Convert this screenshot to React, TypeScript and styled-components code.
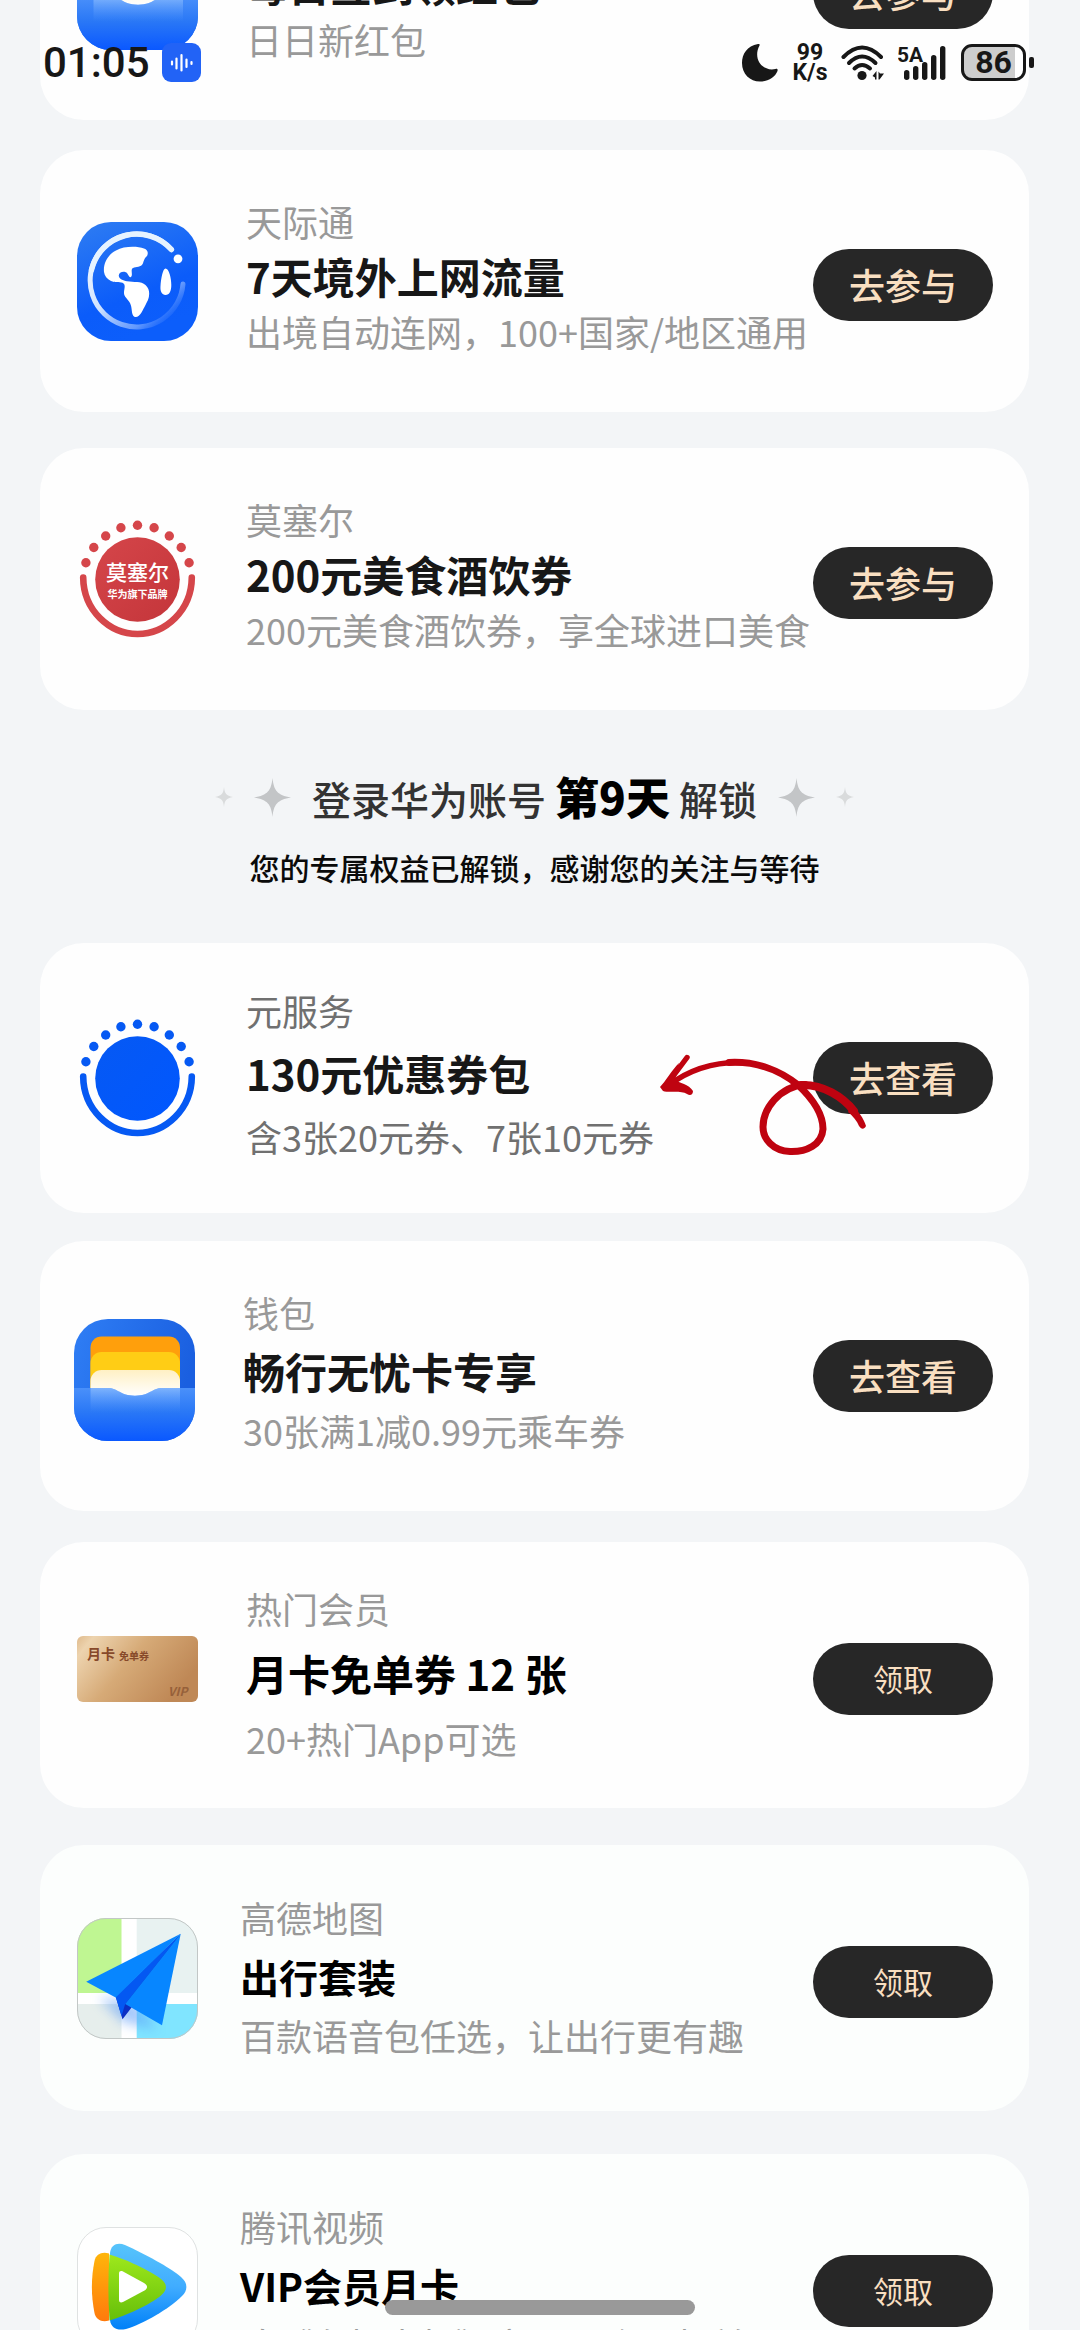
import React from 'react';
import styled, { createGlobalStyle } from 'styled-components';

const GlobalStyle = createGlobalStyle`
  *, *::before, *::after { box-sizing: border-box; }
  body {
    margin: 0;
    background: #f3f5f7;
    font-family: "Noto Sans CJK SC", "Noto Sans", sans-serif;
    -webkit-font-smoothing: antialiased;
  }
  h2, h3, p { margin: 0; font-weight: 400; }
`;

type Tone = 'promo' | 'view' | 'claim';

const Screen = styled.div`
  position: relative;
  height: 100vh;
  overflow: hidden;
  background: #f3f5f7;
`;

/* The feed is scrolled: its first card is partly above the top edge. */
const Feed = styled.main`
  display: flex;
  flex-direction: column;
  padding: 0 51px 0 40px;
  margin-top: -142px;
`;

const Card = styled.article<{ $height: number; $space: number; $inset: number; $tint?: boolean }>`
  position: relative;
  flex: none;
  display: flex;
  align-items: center;
  min-height: ${(p) => p.$height}px;
  margin-top: ${(p) => p.$space}px;
  padding: 0 36px 0 ${(p) => p.$inset}px;
  border-radius: 44px;
  background: ${(p) => (p.$tint ? '#fcfefd' : '#fefefe')};
`;

const IconSlot = styled.div`
  flex: none;
  width: 121px;
  display: flex;
  svg { display: block; width: 100%; height: auto; overflow: visible; }
`;

const Copy = styled.div<{ $gutter: number; $gap: number; $tone: Tone }>`
  flex: 1;
  min-width: 0;
  display: flex;
  flex-direction: column;
  gap: ${(p) => p.$gap}px;
  margin-left: ${(p) => p.$gutter}px;
  padding-bottom: ${(p) => (p.$tone === 'claim' ? 4 : 10)}px;
  white-space: nowrap;
`;

const Label = styled.p<{ $strong?: boolean }>`
  font-size: 36px;
  line-height: 48px;
  color: ${(p) => (p.$strong ? '#707070' : '#999999')};
`;

const Title = styled.h3<{ $small?: boolean; $black?: boolean }>`
  font-size: ${(p) => (p.$small ? 39 : 42)}px;
  line-height: 48px;
  font-weight: 700;
  color: ${(p) => (p.$black ? '#000000' : '#171717')};
`;

const Action = styled.button<{ $tone: Tone }>`
  flex: none;
  width: 180px;
  height: 72px;
  margin: ${(p) => (p.$tone === 'view' ? 0 : 7)}px 0 0;
  padding: 0 0 2px;
  border: 0;
  border-radius: 36px;
  background: #272727;
  color: #f9dfc1;
  font-family: inherit;
  font-size: ${(p) => (p.$tone === 'claim' ? 30 : 36)}px;
  font-weight: ${(p) => (p.$tone === 'claim' ? 400 : 500)};
  line-height: 48px;
  cursor: pointer;
`;

const Unlock = styled.header`
  flex: none;
  display: flex;
  flex-direction: column;
  align-items: center;
  gap: 16px;
  padding: 56px 0 53px;
`;

const UnlockRow = styled.div`
  display: flex;
  align-items: center;
  gap: 21px;
`;

const UnlockTitle = styled.h2`
  display: flex;
  align-items: baseline;
  gap: 9px;
  font-size: 39px;
  line-height: 60px;
  font-weight: 500;
  color: #333333;
  white-space: nowrap;
  strong { font-size: 44px; font-weight: 900; color: #000000; }
`;

const UnlockNote = styled.p`
  font-size: 30px;
  line-height: 46px;
  font-weight: 500;
  color: #0a0a0a;
`;

const ArrowMark = styled.svg`
  position: absolute;
  right: 160px;
  top: 110px;
  width: 210px;
  height: 106px;
  pointer-events: none;
`;

const StatusBar = styled.div`
  position: absolute;
  top: 42px;
  left: 0;
  right: 0;
  height: 41px;
  padding: 0 54px 0 43px;
  display: flex;
  align-items: center;
  justify-content: space-between;
  color: #171717;
  font-family: Roboto, "Noto Sans", sans-serif;
`;

const StatusGroup = styled.div<{ $gap: number }>`
  display: flex;
  align-items: center;
  gap: ${(p) => p.$gap}px;
  svg { display: block; flex: none; }
`;

const Clock = styled.time`
  font-size: 42px;
  line-height: 41px;
  font-weight: 500;
`;

const Speed = styled.div`
  display: flex;
  flex-direction: column;
  align-items: center;
  width: 36px;
  font-size: 23px;
  line-height: 20px;
  font-weight: 700;
  white-space: nowrap;
`;

const Battery = styled.div`
  position: relative;
  display: flex;
  align-items: center;
  justify-content: center;
  width: 65px;
  height: 37px;
  border: 3px solid #171717;
  border-radius: 11px;
  background: linear-gradient(90deg, #cdcdcd 86%, #ffffff 86%);
  font-size: 32px;
  line-height: 31px;
  font-weight: 700;
  &::after {
    content: '';
    position: absolute;
    right: -11px;
    top: 10px;
    width: 5px;
    height: 11px;
    border-radius: 2px;
    background: #171717;
  }
`;

const HomeBar = styled.div`
  position: absolute;
  bottom: 15px;
  left: 50%;
  width: 310px;
  height: 15px;
  transform: translateX(-50%);
  border-radius: 8px;
  background: #999999;
`;

const GlobeIcon = () => (
  <svg viewBox="0 0 121 119" aria-hidden="true">
    <defs>
      <linearGradient id="globeTile" x1="0" y1="0" x2="0.4" y2="1">
        <stop offset="0" stopColor="#2f7df2" />
        <stop offset="0.7" stopColor="#0b5cfa" />
        <stop offset="1" stopColor="#0c5efb" />
      </linearGradient>
      <linearGradient id="globeRing" x1="0.2" y1="0" x2="1" y2="0.85">
        <stop offset="0" stopColor="#f0f8ff" />
        <stop offset="0.45" stopColor="#cfe2ff" />
        <stop offset="0.8" stopColor="#9cc0ff" stopOpacity="0.6" />
        <stop offset="1" stopColor="#5b93ff" stopOpacity="0" />
      </linearGradient>
    </defs>
    <rect width="121" height="119" rx="34" fill="url(#globeTile)" />
    <path d="M94.4 27.5A46.5 46.5 0 1 0 106 62" fill="none" stroke="url(#globeRing)" strokeWidth="5" strokeLinecap="round" />
    <path d="M94.4 27.5A46.5 46.5 0 0 0 14.5 48" fill="none" stroke="#e6f3ff" strokeWidth="5.5" strokeLinecap="round" />
    <circle cx="101" cy="36.8" r="4.4" fill="#fff" />
    <path d="M88.5 46.5C92 46.5 94.3 56 94.3 63C94.3 69 92.5 73 88.5 73C85 73 83 69.500 83.500 64C84 56 86 46.500 88.500 46.500Z" fill="#fff" />
    <path d="M27 50C26 40 32 32 39 28.500C47 24 60 24 67 26.500C71 28 71.500 31 70 34C66 37 67 42 64 43.700C61 45.500 55.500 44.500 54.800 47.500C54.200 50 56 54 53.500 55.200C51 55 51.500 50.500 47.500 49.800C44 49.500 41.500 51.500 41.800 54C42.200 57 46 58.500 50 59.300C57 60.500 64 59 68.500 63C73 67 72.800 73 71 78C68 84 66.500 87 64.500 90.500C62.500 94 59.500 96 57 94.500C54 92 55.500 86 53 81C50.500 76.500 46.500 75 47 70C47.300 66 49 62.500 45.500 60.800C42 59.500 38 61 34 59C30 57 27.500 54 27 50Z" fill="#fff" />
  </svg>
);

const emblemDots = [
  [0, -54.3], [16.6, -51.7], [31.8, -43.5], [43.7, -32], [51.6, -16.8],
  [-16.6, -51.7], [-31.8, -43.5], [-43.7, -32], [-51.6, -16.8],
];

const EmblemIcon = ({ id, from, to, children }: { id: string; from: string; to: string; children?: React.ReactNode }) => (
  <svg viewBox="-60.5 -60.5 121 121" aria-hidden="true">
    <defs>
      <linearGradient id={id} x1="0" y1="0" x2="1" y2="1">
        <stop offset="0" stopColor={from} />
        <stop offset="1" stopColor={to} />
      </linearGradient>
    </defs>
    {emblemDots.map(([x, y]) => (
      <circle key={`${x}`} cx={x} cy={y} r="4.7" fill={from} />
    ))}
    <circle r="42.3" fill={`url(#${id})`} />
    <path d="M-54.3 -2C-54 31 -28 54.5 0 54.5S54 31 54.3 -2" fill="none" stroke={from} strokeWidth="6.6" strokeLinecap="round" />
    {children}
  </svg>
);

const EmblemText = styled.text`
  fill: #ffffff;
  text-anchor: middle;
  font-family: "Noto Sans CJK SC", sans-serif;
`;

/* headroom: empty space kept above the tile, so that it sits lower in its slot */
const WalletIcon = ({ id, headroom = 0 }: { id: string; headroom?: number }) => (
  <svg viewBox={`0 ${-headroom} 121 ${122 + headroom}`} aria-hidden="true">
    <defs>
      <linearGradient id={`${id}Tile`} x1="0" y1="0" x2="1" y2="0.3">
        <stop offset="0" stopColor="#2f7ef5" />
        <stop offset="1" stopColor="#1a5fe0" />
      </linearGradient>
      <linearGradient id={`${id}Pocket`} x1="0" y1="0" x2="0" y2="1">
        <stop offset="0" stopColor="#4a90fa" />
        <stop offset="0.45" stopColor="#2a78f6" />
        <stop offset="1" stopColor="#0a58ff" />
      </linearGradient>
      <linearGradient id={`${id}Glow`} x1="0" y1="0" x2="0" y2="1">
        <stop offset="0" stopColor="#a9d0ff" stopOpacity="0.55" />
        <stop offset="1" stopColor="#5fa0ff" stopOpacity="0" />
      </linearGradient>
      <linearGradient id={`${id}Cream`} x1="0" y1="0" x2="0" y2="1">
        <stop offset="0" stopColor="#fff0c4" />
        <stop offset="0.65" stopColor="#ffffff" />
      </linearGradient>
      <clipPath id={`${id}Clip`}><rect width="121" height="122" rx="34" /></clipPath>
    </defs>
    <g clipPath={`url(#${id}Clip)`}>
      <rect width="121" height="122" fill={`url(#${id}Tile)`} />
      <rect x="16.5" y="17.5" width="89.5" height="62" rx="11" fill="#ff9f0c" />
      <rect x="16.5" y="33" width="89.5" height="50" rx="11" fill="#ffcd15" />
      <rect x="16.5" y="51" width="89.5" height="40" rx="11" fill={`url(#${id}Cream)`} />
      <path d="M0 69H34C44 69 46 76.7 61 76.7S78 69 88 69H121V122H0Z" fill={`url(#${id}Pocket)`} />
      <path d="M16.5 69H34C44 69 46 76.7 61 76.7S78 69 88 69H106V94H16.5Z" fill={`url(#${id}Glow)`} />
    </g>
  </svg>
);

/* The voucher sits above the middle of its slot. */
const VoucherIcon = () => (
  <svg viewBox="0 0 121 78" aria-hidden="true">
    <defs>
      <linearGradient id="voucher" x1="0" y1="0" x2="1" y2="0.45">
        <stop offset="0" stopColor="#dfba8c" />
        <stop offset="0.12" stopColor="#edd3ae" />
        <stop offset="0.5" stopColor="#d6aa77" />
        <stop offset="1" stopColor="#bf8856" />
      </linearGradient>
    </defs>
    <rect width="121" height="66" rx="6" fill="url(#voucher)" />
    <g fill="#87492a" fontFamily='"Noto Sans CJK SC", sans-serif' fontWeight="700">
      <text x="10" y="23" fontSize="14">月卡</text>
      <text x="42" y="24" fontSize="10">免单券</text>
      <text x="91" y="60" fontSize="12" fontStyle="italic" fill="#96603a">VIP</text>
    </g>
  </svg>
);

const MapIcon = () => (
  <svg viewBox="0 0 121 121" aria-hidden="true">
    <defs>
      <clipPath id="mapClip"><rect width="121" height="121" rx="29" /></clipPath>
      <filter id="mapBlur" x="-50%" y="-50%" width="200%" height="200%"><feGaussianBlur stdDeviation="6" /></filter>
    </defs>
    <g clipPath="url(#mapClip)">
      <rect width="121" height="121" fill="#ffffff" />
      <rect width="44.5" height="75" fill="#bff692" />
      <rect x="59.7" width="62" height="75" fill="#e8f2f1" />
      <rect y="86" width="44.5" height="35" fill="#e6eeec" />
      <rect x="59.7" y="86" width="62" height="35" fill="#80e5ff" />
      <path d="M22 80L46 104L80 112L60 84Z" fill="#5b9cf8" opacity="0.55" filter="url(#mapBlur)" />
    </g>
    <rect x="0.5" y="0.5" width="120" height="120" rx="28.5" fill="none" stroke="#c2c7c6" />
    <path d="M38.7 78.7L45.5 101.3L54 90.3L60 80L103.7 15.7Z" fill="#0b2fc4" />
    <path d="M38.7 78.7L44.5 98L48.2 86L103.7 15.7Z" fill="#0458f2" />
    <path d="M103.7 15.7L9.2 63.7L38.7 79.5Z" fill="#0786ff" />
    <path d="M103.7 15.7L48.2 86L85 107.2Z" fill="#0786ff" />
  </svg>
);

const VideoIcon = () => (
  <svg viewBox="0 0 121 121" aria-hidden="true">
    <defs>
      <linearGradient id="vBlue" x1="0" y1="0" x2="0" y2="1">
        <stop offset="0" stopColor="#57c4fb" /><stop offset="0.5" stopColor="#40acff" /><stop offset="1" stopColor="#0080f8" />
      </linearGradient>
      <linearGradient id="vOrange" x1="0" y1="0" x2="0" y2="1">
        <stop offset="0" stopColor="#ffb50a" /><stop offset="1" stopColor="#ff7a0c" />
      </linearGradient>
      <linearGradient id="vGreen" x1="0" y1="0" x2="0" y2="1">
        <stop offset="0" stopColor="#9ee81c" /><stop offset="1" stopColor="#66bf0a" />
      </linearGradient>
    </defs>
    <rect x="0.5" y="0.5" width="120" height="120" rx="28.5" fill="#fff" stroke="#dfe2e2" />
    <path d="M33 26C34 17 41 15 48 18C68 27 92 40 104 50C111 56 111 63 105 69C92 82 66 97 49 102C40 104 34 101 33 93Z" fill="url(#vBlue)" />
    <path d="M32 26.5C25 24.5 19 27 17.5 34C14 51 14 69 17.5 86C19 93 25 95.5 32 93.5Z" fill="url(#vOrange)" />
    <path d="M32.5 27.5C48 32 72 43 84 52C90.5 57 90.5 62.5 84.5 68C73 78 48 89 32.5 93.5C31 72 31 49 32.5 27.5Z" fill="url(#vGreen)" />
    <path d="M42 46.5C42 44 44 43.5 46 44.5L67 56C71 58.5 71 61 67.5 63.5L46 75C44 76 42 75.5 42 73Z" fill="#fff" />
  </svg>
);

const Sparkle = ({ w, h, color }: { w: number; h: number; color: string }) => (
  <svg width={w} height={h} viewBox="0 0 40 40" preserveAspectRatio="none" aria-hidden="true">
    <path d="M20 0C21.5 13 25 17.5 40 20C25 22.5 21.5 27 20 40C18.5 27 15 22.5 0 20C15 17.5 18.5 13 20 0Z" fill={color} />
  </svg>
);

const Arrow = () => (
  <ArrowMark viewBox="0 0 210 106" aria-hidden="true">
    <g fill="none" stroke="#bf0310" strokeLinecap="round" strokeLinejoin="round">
      <path d="M10 32C30 17 55 9 82 9.5" strokeWidth="5.4" />
      <path d="M70 9.5C98 8 122 18 139 32C154 46 164 60 164 76C163 92 147 99 131 98.5C114 98 104 86 104 74C104 56 120 34 146 31.5" strokeWidth="7" />
      <path d="M142 32C164 31 184 44 195 58" strokeWidth="8" />
      <path d="M28 4.5L6 34" strokeWidth="5.4" />
    </g>
    <path d="M192 52C199 57 205 66 207 73C205 77 202 76 200 73C198 68 194 63 189 59Z" fill="#bf0310" />
    <path d="M1 34C6 29 13 17 20 10L16 27C20 30 30 31 34 38C34 42 31 43 28 41C22 37 10 40 4 38Z" fill="#bf0310" />
  </ArrowMark>
);

interface Offer {
  icon: React.ReactNode;
  label: string;
  title: string;
  note: string;
  action: string;
  tone: Tone;
  height: number;
  space: number;
  gap: number;
  inset?: number;
  gutter?: number;
  small?: boolean;
  strong?: boolean;
  tint?: boolean;
  marked?: boolean;
}

const earlier: Offer[] = [
  { icon: <WalletIcon id="walletA" />, label: '钱包', title: '每日签到领红包', note: '日日新红包', action: '去参与', tone: 'promo', height: 262, space: 0, gap: 7 },
  { icon: <GlobeIcon />, label: '天际通', title: '7天境外上网流量', note: '出境自动连网，100+国家/地区通用', action: '去参与', tone: 'promo', height: 262, space: 30, gap: 7 },
  {
    icon: (
      <EmblemIcon id="emblemRed" from="#d5464a" to="#c4353a">
        <EmblemText y="0" fontSize="21" fontWeight="500">莫塞尔</EmblemText>
        <EmblemText y="18" fontSize="10" fontWeight="700">华为旗下品牌</EmblemText>
      </EmblemIcon>
    ),
    label: '莫塞尔', title: '200元美食酒饮券', note: '200元美食酒饮券，享全球进口美食', action: '去参与', tone: 'promo', height: 262, space: 36, gap: 7,
  },
];

const unlocked: Offer[] = [
  { icon: <EmblemIcon id="emblemBlue" from="#0659f3" to="#0057ff" />, label: '元服务', title: '130元优惠券包', note: '含3张20元券、7张10元券', action: '去查看', tone: 'view', height: 270, space: 0, gap: 15, strong: true, marked: true },
  { icon: <WalletIcon id="walletB" headroom={8} />, label: '钱包', title: '畅行无忧卡专享', note: '30张满1减0.99元乘车券', action: '去查看', tone: 'view', height: 270, space: 28, gap: 11, inset: 34 },
  { icon: <VoucherIcon />, label: '热门会员', title: '月卡免单券 12 张', note: '20+热门App可选', action: '领取', tone: 'claim', height: 266, space: 31, gap: 17 },
  { icon: <MapIcon />, label: '高德地图', title: '出行套装', note: '百款语音包任选，让出行更有趣', action: '领取', tone: 'claim', height: 266, space: 37, gap: 11, gutter: 42, small: true, tint: true },
  { icon: <VideoIcon />, label: '腾讯视频', title: 'VIP会员月卡', note: '追《在打击架》享SVIP会员权益', action: '领取', tone: 'claim', height: 266, space: 43, gap: 11, gutter: 42, small: true, tint: true },
];

const OfferCard = ({ offer }: { offer: Offer }) => (
  <Card $height={offer.height} $space={offer.space} $inset={offer.inset ?? 37} $tint={offer.tint}>
    <IconSlot>{offer.icon}</IconSlot>
    <Copy $gutter={offer.gutter ?? 48} $gap={offer.gap} $tone={offer.tone}>
      <Label $strong={offer.strong}>{offer.label}</Label>
      <Title $small={offer.small} $black={offer.tone === 'claim'}>{offer.title}</Title>
      <Label $strong={offer.strong}>{offer.note}</Label>
    </Copy>
    <Action type="button" $tone={offer.tone}>{offer.action}</Action>
    {offer.marked && <Arrow />}
  </Card>
);

const signalBars = [10, 14, 18, 25, 34];

export default function App() {
  return (
    <Screen>
      <GlobalStyle />
      <Feed>
        {earlier.map((offer) => <OfferCard key={offer.title} offer={offer} />)}
        <Unlock>
          <UnlockRow>
            <Sparkle w={18} h={20} color="#d9dbdc" />
            <Sparkle w={37} h={39} color="#c3c5c7" />
            <UnlockTitle>登录华为账号<strong>第9天</strong>解锁</UnlockTitle>
            <Sparkle w={37} h={39} color="#c3c5c7" />
            <Sparkle w={18} h={20} color="#d9dbdc" />
          </UnlockRow>
          <UnlockNote>您的专属权益已解锁，感谢您的关注与等待</UnlockNote>
        </Unlock>
        {unlocked.map((offer) => <OfferCard key={offer.title} offer={offer} />)}
      </Feed>

      <StatusBar>
        <StatusGroup $gap={12}>
          <Clock>01:05</Clock>
          <svg width="39" height="39" viewBox="0 0 39 39" aria-hidden="true">
            <rect width="39" height="39" rx="9" fill="#2263f6" />
            <path d="M10 18.5V21.5M14.5 15.5V25.5M19.5 12V27.5M24.5 16.5V24M29.5 19V21" stroke="#fff" strokeWidth="2.2" strokeLinecap="round" />
          </svg>
        </StatusGroup>
        <StatusGroup $gap={13}>
          <svg width="38" height="39" viewBox="0 0 38 39" aria-hidden="true">
            <path d="M17 1C6 3 1 11 1 20C1 31 9 38.5 19 38.5C28 38.5 34 34 36.5 28C37 26 36 25.5 34.5 26C23 29 11 17 18.5 2.5C19 1.5 18.5 0.8 17 1Z" fill="#171717" />
          </svg>
          <Speed><span>99</span><span>K/s</span></Speed>
          <svg width="44" height="36" viewBox="0 0 44 36" aria-hidden="true">
            <g fill="none" stroke="#171717" strokeWidth="4" strokeLinecap="round">
              <path d="M2.5 12Q21 -7 40 12" />
              <path d="M8 18Q21 5 34.5 18" />
              <path d="M13.5 23.5Q21 16.5 29 23.5" />
            </g>
            <circle cx="21" cy="30.5" r="4.6" fill="#171717" />
            <path d="M31.5 31L35.5 26V34.5H34V32.5ZM37.5 26.5L39 28.5H43L38.5 34.5H37.5Z" fill="#171717" />
          </svg>
          <svg width="50" height="36" viewBox="0 0 50 36" aria-hidden="true">
            <text x="-1" y="17" fontSize="21" fontWeight="700" fill="#171717">5A</text>
            {signalBars.map((h, i) => (
              <rect key={h} x={6 + i * 9} y={35 - h} width="5.4" height={h} rx="2.7" fill="#171717" />
            ))}
          </svg>
          <Battery>86</Battery>
        </StatusGroup>
      </StatusBar>
      <HomeBar />
    </Screen>
  );
}
